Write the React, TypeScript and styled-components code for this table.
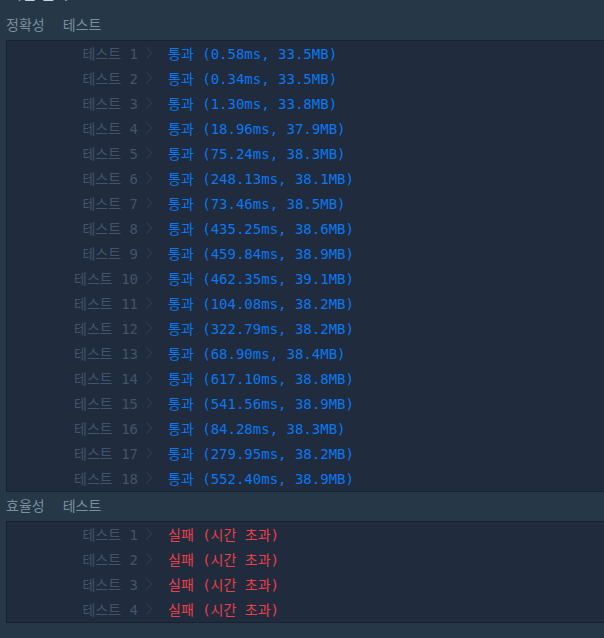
import React from 'react';
import styled, { createGlobalStyle } from 'styled-components';

const GlobalStyle = createGlobalStyle`
  html, body {
    margin: 0;
    padding: 0;
    background: #263747;
    overflow: hidden;
  }
`;

const Page = styled.div`
  width: 604px;
  height: 638px;
  overflow: hidden;
  background: #263747;
  font-family: 'Noto Sans CJK KR', 'Noto Sans', sans-serif;
`;

// the page title sits mostly above the viewport, only its lower edge shows
const Title = styled.div`
  margin-top: -18px;
  padding-left: 7px;
  height: 29px;
  font-size: 16px;
  line-height: 20px;
  color: #c9d1da;
`;

const SectionHeader = styled.div`
  display: flex;
  align-items: center;
  gap: 18px;
  height: 29px;
  box-sizing: border-box;
  padding: 0 0 3px 6px;
  font-size: 14px;
  color: #78909c;
`;

const Table = styled.div`
  margin-left: 6px;
  margin-right: -10px;
  background: #202b3d;
  border: 1px solid #172231;
`;

const Row = styled.div`
  display: flex;
  align-items: center;
  height: 25px;
  box-sizing: border-box;
  padding-bottom: 2px;
  font-family: 'DejaVu Sans Mono', 'Noto Sans CJK KR', monospace;
  font-size: 14px;
  white-space: pre;
`;

const Label = styled.div`
  width: 131px;
  text-align: right;
  color: #42546a;
`;

const Chevron = styled.svg`
  width: 6px;
  height: 12px;
  margin: 0 16px 0 8px;
  flex-shrink: 0;
`;

const Result = styled.div<{ $fail?: boolean }>`
  color: ${(p) => (p.$fail ? '#ec3f48' : '#0a78f0')};
`;

const accuracy = [
  ['0.58ms', '33.5MB'],
  ['0.34ms', '33.5MB'],
  ['1.30ms', '33.8MB'],
  ['18.96ms', '37.9MB'],
  ['75.24ms', '38.3MB'],
  ['248.13ms', '38.1MB'],
  ['73.46ms', '38.5MB'],
  ['435.25ms', '38.6MB'],
  ['459.84ms', '38.9MB'],
  ['462.35ms', '39.1MB'],
  ['104.08ms', '38.2MB'],
  ['322.79ms', '38.2MB'],
  ['68.90ms', '38.4MB'],
  ['617.10ms', '38.8MB'],
  ['541.56ms', '38.9MB'],
  ['84.28ms', '38.3MB'],
  ['279.95ms', '38.2MB'],
  ['552.40ms', '38.9MB'],
];

const Arrow = () => (
  <Chevron viewBox='0 0 6 12'>
    <polyline points='0.5,0.5 5.5,6 0.5,11.5' fill='none' stroke='#35455a' strokeWidth='1' />
  </Chevron>
);

const TestRow = ({ n, children }: { n: number; children: React.ReactNode }) => (
  <Row>
    <Label>테스트 {n}</Label>
    <Arrow />
    {children}
  </Row>
);

export default function App() {
  return (
    <Page>
      <GlobalStyle />
      <Title>채점 결과</Title>
      <SectionHeader>
        <span>정확성</span>
        <span>테스트</span>
      </SectionHeader>
      <Table>
        {accuracy.map(([time, mem], i) => (
          <TestRow key={i} n={i + 1}>
            <Result>
              통과 ({time}, {mem})
            </Result>
          </TestRow>
        ))}
      </Table>
      <SectionHeader>
        <span>효율성</span>
        <span>테스트</span>
      </SectionHeader>
      <Table>
        {[1, 2, 3, 4].map((n) => (
          <TestRow key={n} n={n}>
            <Result $fail>실패 (시간 초과)</Result>
          </TestRow>
        ))}
      </Table>
    </Page>
  );
}
